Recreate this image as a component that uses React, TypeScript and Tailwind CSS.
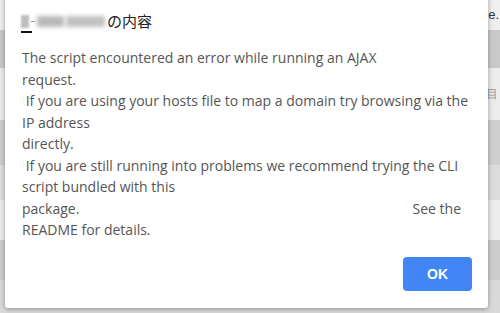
import React from "react";

export default function App() {
  const lines: { t: string; extra?: string }[] = [
    { t: "The script encountered an error while running an AJAX" },
    { t: "request." },
    { t: " If you are using your hosts file to map a domain try browsing via the" },
    { t: "IP address" },
    { t: "directly." },
    { t: " If you are still running into problems we recommend trying the CLI" },
    { t: "script bundled with this" },
    { t: "package.", extra: "See the" },
    { t: "README for details." },
  ];
  return (
    <div className="relative w-[500px] h-[313px] overflow-hidden bg-[#d4d4d4]" style={{ fontFamily: '"Liberation Sans", Arial, sans-serif' }}>
      {/* background page strips */}
      <div className="flex flex-col w-full h-full">
        <div className="h-[30px] bg-[#efefef] flex items-start justify-end pr-[1px] pt-[5px] text-[13px] text-[#333]">e.</div>
        <div className="h-[38px] bg-[#c9c9c9]" />
        <div className="h-[52px] bg-[#ececec] flex items-center justify-end pr-[2px] text-[12px] text-[#999]">目</div>
        <div className="h-[45px] bg-[#cfcfcf]" />
        <div className="h-[35px] bg-[#dcdcdc]" />
        <div className="h-[40px] bg-[#ededed]" />
        <div className="h-[40px] bg-[#cdcdcd]" />
        <div className="flex-1 bg-[#d9d9d9]" />
      </div>

      {/* dialog */}
      <div className="absolute left-[5px] top-[-10px] w-[483px] h-[318px] bg-white rounded-[3px] shadow-[0_1px_5px_rgba(0,0,0,0.35)] flex flex-col">
        <div className="flex items-center h-[22px] mt-[20px] pl-[16px] text-[15px] text-[#222]" style={{ fontFamily: '"Open Sans", "Noto Sans CJK JP", sans-serif' }}>
          <div className="relative flex items-center h-[18px]">
            <div className="w-[8px] h-[13px] bg-[#bdbdbd] blur-[1px]" />
            <div className="absolute left-0 bottom-[-3px] w-[11px] h-[2px] bg-[#111]" />
            <div className="ml-[2px] w-[4px] h-[1px] bg-[#999]" />
            <div className="ml-[2px] w-[27px] h-[11px] bg-[#b8b8b8] blur-[2px]" />
            <div className="ml-[2px] w-[39px] h-[11px] bg-[#c0c0c0] blur-[2px]" />
          </div>
          <span className="ml-[2px]">の内容</span>
        </div>
        <div className="mt-[15px] pl-[17px] text-[14px] leading-[21.5px] text-[#555]" style={{ fontFamily: '"Open Sans", sans-serif' }}>
          {lines.map((l, i) => (
            <div key={i} className="flex whitespace-pre">
              <span>{l.t}</span>
              {l.extra && <span className="ml-auto mr-[27px]">{l.extra}</span>}
            </div>
          ))}
        </div>
        <div className="mt-auto mb-[17px] mr-[16px] flex justify-end">
          <button className="w-[69px] h-[34px] rounded-[4px] bg-[#4286f5] text-white text-[14px] font-bold" style={{ fontFamily: '"Liberation Sans", sans-serif' }}>OK</button>
        </div>
      </div>
    </div>
  );
}
